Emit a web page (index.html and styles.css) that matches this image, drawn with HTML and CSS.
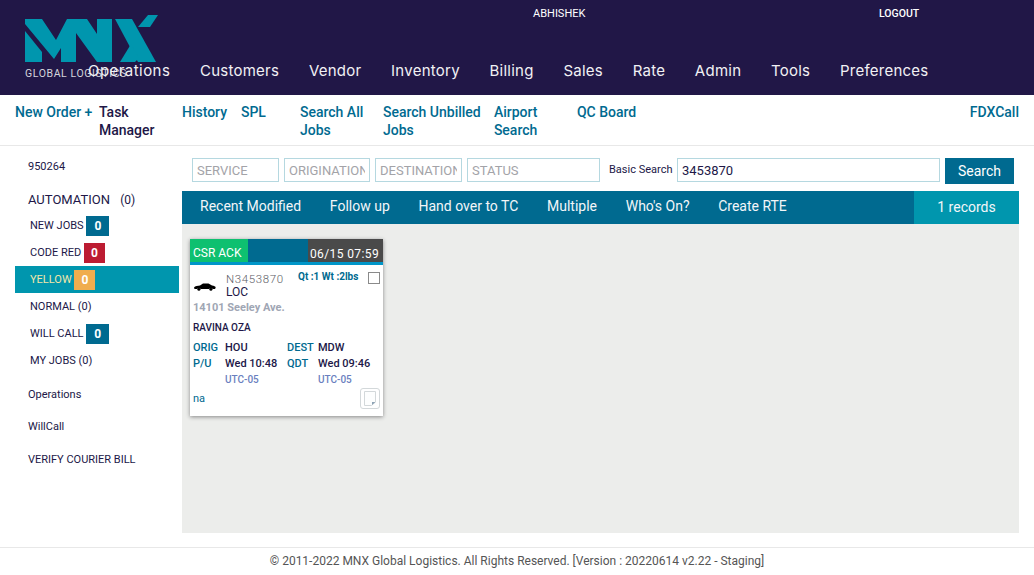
FILE: index.html
```html
<!DOCTYPE html>
<html lang="en">
<head>
<meta charset="UTF-8" />
<meta name="viewport" content="width=device-width, initial-scale=1" />
<title>MNX Jobs</title>
<link rel="stylesheet" href="styles.css">
</head>
<body>

<header class="top">
  <div class="logo">
    <svg width="134" height="48" viewBox="0 0 134 48" fill="#0096ae">
      <path d="M0 16L17 37V47H0Z"/>
      <path d="M0 4H17L31 25L42 4H62L72 19V4H87V47H72L51 18V47H36V33L29 44L0 9Z"/>
      <path d="M90 4H107L131 47H113Z"/>
      <path d="M95 47L106 29L114 43L110 47Z"/>
      <path d="M113 12L123 0H133L125 12Z"/>
    </svg>
    <span class="logo-text">GLOBAL LOGISTICS</span>
  </div>
  <div class="top-user">
    <span class="user-name">ABHISHEK</span>
    <a class="logout">LOGOUT</a>
  </div>
  <nav class="main-nav">
    <a class="nav-first">Operations</a>
    <a>Customers</a>
    <a>Vendor</a>
    <a>Inventory</a>
    <a>Billing</a>
    <a>Sales</a>
    <a>Rate</a>
    <a>Admin</a>
    <a>Tools</a>
    <a>Preferences</a>
  </nav>
</header>

<div class="sub-nav">
  <a class="w-new">New Order +</a>
  <a class="w-task dark">Task Manager</a>
  <a class="w-history">History</a>
  <a class="w-spl">SPL</a>
  <a class="w-all">Search All Jobs</a>
  <a class="w-unbilled">Search Unbilled Jobs</a>
  <a class="w-airport">Airport Search</a>
  <a class="w-qc">QC Board</a>
  <a class="w-fdx">FDXCall</a>
</div>

<div class="page">
  <aside class="side">
    <div class="side-id">950264</div>
    <div class="side-title">AUTOMATION <span class="side-count">(0)</span></div>
    <ul class="side-list">
      <li>NEW JOBS <span class="badge blue">0</span></li>
      <li>CODE RED <span class="badge red">0</span></li>
      <li class="active">YELLOW <span class="badge orange">0</span></li>
      <li>NORMAL (0)</li>
      <li>WILL CALL <span class="badge blue">0</span></li>
      <li>MY JOBS (0)</li>
    </ul>
    <div class="side-link first">Operations</div>
    <div class="side-link">WillCall</div>
    <div class="side-link">VERIFY COURIER BILL</div>
  </aside>

  <main class="content">
    <form class="filters">
      <input class="f-service" placeholder="SERVICE">
      <input class="f-orig" placeholder="ORIGINATION">
      <input class="f-dest" placeholder="DESTINATION">
      <input class="f-status" placeholder="STATUS">
      <label class="search-label">Basic Search</label>
      <input class="f-search" value="3453870">
      <button class="search-btn" type="button">Search</button>
    </form>

    <div class="tabs">
      <a>Recent Modified</a>
      <a>Follow up</a>
      <a>Hand over to TC</a>
      <a>Multiple</a>
      <a>Who's On?</a>
      <a>Create RTE</a>
      <span class="records">1 records</span>
    </div>

    <section class="board">
      <article class="card">
        <div class="card-head">
          <span class="status">CSR ACK</span>
          <span class="stamp">06/15 07:59</span>
        </div>
        <div class="card-body">
          <div class="job-row">
            <svg class="car" width="22" height="8" viewBox="0 0 22 8">
              <path fill="#000" d="M0 4.500C1 3.200 4 3 6 2.600L9 .6H14.500L18 2.600C20 2.900 21.700 3.400 21.700 4.800L21 6H18.500C18 4.600 15.800 4.600 15.300 6H6.500C6 4.600 3.800 4.600 3.300 6H.5Z"/>
              <circle cx="4.900" cy="6.200" r="1.500"/>
              <circle cx="16.900" cy="6.200" r="1.500"/>
            </svg>
            <div class="job-id">
              <div class="job-no">N3453870</div>
              <div class="job-type">LOC</div>
            </div>
            <div class="qty">Qt :1 Wt :2lbs</div>
            <span class="check"></span>
          </div>
          <div class="addr">14101 Seeley Ave.</div>
          <div class="person">RAVINA OZA</div>
          <div class="route">
            <b>ORIG</b><span>HOU</span><b>DEST</b><span>MDW</span>
            <b>P/U</b><span>Wed 10:48</span><b>QDT</b><span>Wed 09:46</span>
            <i></i><em>UTC-05</em><i></i><em>UTC-05</em>
          </div>
          <div class="card-foot">
            <span class="na">na</span>
            <span class="note">
              <svg width="12" height="15" viewBox="0 0 12 15">
                <path fill="#fdfefe" stroke="#d3d8da" d="M.5 .5H11.500V11L7.500 14.500H.5Z"/>
                <path fill="#8ea3b5" d="M8 14V11H11.500Z"/>
              </svg>
            </span>
          </div>
        </div>
      </article>
    </section>
  </main>
</div>

<footer class="foot">© 2011-2022 MNX Global Logistics. All Rights Reserved. [Version : 20220614 v2.22 - Staging]</footer>

</body>
</html>
```

FILE: styles.css
```css
* {
  box-sizing: border-box;
}
body {
  margin: 0;
  font-family: Roboto, Arial, sans-serif;
  background: white;
  color: #211747;
  height: 575px;
  overflow: hidden;
}

/* header */
.top {
  position: relative;
  height: 95px;
  background: #211747;
  color: white;
}
.logo {
  position: absolute;
  left: 25px;
  top: 15px;
}
.logo svg {
  display: block;
}
.logo-text {
  display: block;
  margin-top: 4px;
  font-size: 10.500px;
  line-height: 13px;
  letter-spacing: .6px;
  color: #d5d5dc;
  white-space: nowrap;
}
.top-user {
  display: flex;
  height: 27px;
  padding-top: 7px;
  font-size: 10.500px;
  font-weight: 500;
  line-height: 13px;
}
.user-name {
  margin-left: 533px;
  width: 346px;
  font-size: 11px;
  font-weight: 400;
}
.main-nav {
  position: relative;
  display: flex;
  gap: 29.700px;
  padding: 34px 0 0 88px;
  font-family: Inter, Roboto, sans-serif;
  font-size: 15px;
  line-height: 20px;
  letter-spacing: .25px;
  color: #f1f1f4;
}
.nav-first {
  letter-spacing: .45px;
}

/* second row of links */
.sub-nav {
  display: flex;
  height: 51px;
  padding: 8px 15px 0;
  font-size: 14px;
  font-weight: 500;
  line-height: 18px;
  color: #006a90;
  border-bottom: 1px solid #e8e8e8;
}
.sub-nav .dark {
  color: #211747;
}
.w-new { width: 84px; }
.w-task { width: 83px; }
.w-history { width: 59px; }
.w-spl { width: 59px; }
.w-all { width: 83px; }
.w-unbilled { width: 111px; }
.w-airport { width: 83px; }
.w-qc { width: 393px; }
.w-fdx { white-space: nowrap; }

.page {
  display: flex;
  padding-left: 15px;
  height: 401px;
}

/* sidebar */
.side {
  width: 164px;
  margin-right: 3px;
  font-size: 11px;
}
.side-id {
  padding: 14px 0 0 13px;
  line-height: 13px;
}
.side-title {
  padding: 17px 0 0 13px;
  font-size: 13px;
  line-height: 20px;
}
.side-count {
  margin-left: 7px;
  font-size: 12px;
}
.side-list {
  list-style: none;
  margin: 2px 0 0;
  padding: 0;
}
.side-list li {
  display: flex;
  align-items: center;
  height: 27px;
  padding-left: 15px;
  font-size: 11px;
  white-space: pre;
}
.side-list li.active {
  background: #0096ae;
  color: #f3e6a9;
}
.badge {
  display: inline-block;
  width: 23px;
  height: 20px;
  text-align: center;
  font-size: 12px;
  font-weight: 700;
  line-height: 20px;
  color: white;
}
.badge.red {
  width: 21px;
  background: #bc1c32;
}
.badge.blue {
  background: #006a90;
}
.badge.orange {
  width: 21px;
  background: #f0ad4e;
}
.side-link {
  padding-left: 13px;
  font-size: 11px;
  line-height: 13px;
  margin-top: 19px;
}
.side-link.first {
  margin-top: 14px;
}
.side-link:last-child {
  margin-top: 20px;
}

/* search */
.content {
  width: 837px;
}
.filters {
  display: flex;
  align-items: flex-start;
  height: 45px;
  padding: 12px 0 0 10px;
}
.filters input {
  height: 24px;
  padding: 0 4px;
  border: 1px solid #b5d8e0;
  font-family: Roboto, Arial, sans-serif;
  font-size: 13px;
  color: #211747;
  outline: none;
}
.filters input::placeholder {
  color: #a3a3a8;
  opacity: 1;
}
.f-service { width: 87px; margin-right: 5px; }
.f-orig { width: 86px; margin-right: 5px; }
.f-dest { width: 87px; margin-right: 5px; }
.f-status { width: 133px; margin-right: 9px; }
.search-label {
  width: 68px;
  font-size: 11px;
  line-height: 23px;
}
.filters .f-search {
  width: 263px;
  margin-right: 5px;
}
.search-btn {
  width: 69px;
  height: 26px;
  border: 0;
  padding: 0;
  background: #006a90;
  color: white;
  font-family: Roboto, Arial, sans-serif;
  font-size: 14px;
  font-weight: 400;
}
.tabs {
  display: flex;
  height: 33px;
  padding-left: 18px;
  background: #006a90;
  color: #f3f6f9;
  font-size: 14px;
  line-height: 30px;
}
.tabs a {
  margin-right: 28.700px;
}
.records {
  margin-left: auto;
  width: 105px;
  height: 33px;
  background: #0096ae;
  text-align: center;
  line-height: 33px;
}

/* job card */
.board {
  height: 309px;
  padding: 15px 8px;
  background: #ecedeb;
}
.card {
  width: 193px;
  height: 177px;
  background: white;
  box-shadow: 0 1px 4px #888;
}
.card-head {
  display: flex;
  justify-content: space-between;
  height: 26px;
  background: #006a90;
  border-bottom: 3px solid #0096c8;
  font-size: 12px;
  color: white;
}
.status {
  width: 58px;
  padding-left: 3px;
  line-height: 29px;
  background: #0ec070;
  height: 23px;
}
.stamp {
  width: 75px;
  height: 23px;
  padding-top: 6px;
  padding-right: 2px;
  text-align: center;
  line-height: 19px;
  background: #4a4a4a;
  letter-spacing: .4px;
}
.card-body {
  padding: 7px 3px 0;
}
.job-row {
  display: flex;
  height: 29px;
}
.car {
  margin: 11px 0 0 1px;
}
.job-id {
  margin-left: 10px;
  width: 72px;
}
.job-no {
  font-size: 11.500px;
  font-weight: 300;
  line-height: 14px;
  letter-spacing: .6px;
  color: #5d5d66;
}
.job-type {
  font-size: 12px;
  line-height: 13px;
}
.qty {
  margin-top: -1px;
  font-size: 10px;
  font-weight: 700;
  line-height: 12px;
  color: #006a90;
  width: 70px;
  white-space: nowrap;
}
.check {
  width: 12px;
  height: 12px;
  border: 1px solid #8a8a8a;
}
.addr {
  font-size: 11px;
  font-weight: 700;
  line-height: 14px;
  color: #a0a6b4;
  height: 20px;
}
.person {
  font-size: 10px;
  font-weight: 500;
  line-height: 14px;
  height: 19px;
}
.route {
  display: grid;
  grid-template-columns: 32px 62px 31px 1fr;
  grid-auto-rows: 16px;
  font-size: 11px;
  line-height: 16px;
  font-weight: 500;
}
.route b {
  font-weight: 500;
  color: #006a90;
}
.route em {
  font-style: normal;
  font-size: 10px;
  color: #6a7fc0;
}
.card-foot {
  display: flex;
  justify-content: space-between;
  align-items: flex-start;
}
.na {
  margin-top: 4px;
  font-size: 11px;
  line-height: 13px;
  color: #006a90;
}
.note {
  display: flex;
  align-items: center;
  justify-content: center;
  width: 20px;
  height: 21px;
  border: 1px solid #d3d8da;
  border-radius: 3px;
}

.foot {
  height: 28px;
  border-top: 1px solid #e8e8e8;
  text-align: center;
  font-size: 12px;
  line-height: 27px;
  color: #555;
}
```
